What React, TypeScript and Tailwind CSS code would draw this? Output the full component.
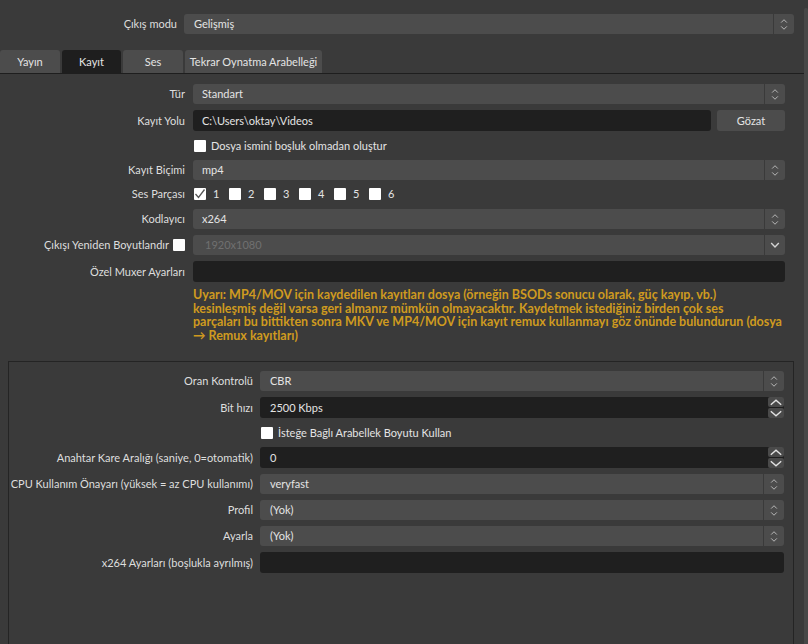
import React from "react";

const ComboArrows = ({ single = false }: { single?: boolean }) => (
  <div className="flex h-full w-[21px] shrink-0 items-center justify-center border-l border-[#3a3a3a]">
    {single ? (
      <svg width="21" height="20" viewBox="0 0 21 20" fill="none">
        <path d="M6.5 8 L10.5 12 L14.5 8" stroke="#d4d4d4" strokeWidth="1.5" />
      </svg>
    ) : (
      <svg width="21" height="20" viewBox="0 0 21 20" fill="none">
        <path d="M7.5 8.5 L10.5 5.5 L13.5 8.5" stroke="#bdbdbd" strokeWidth="1" />
        <path d="M7.5 12.5 L10.5 15.5 L13.5 12.5" stroke="#bdbdbd" strokeWidth="1" />
      </svg>
    )}
  </div>
);

const Combo = ({
  value,
  single = false,
  disabled = false,
  pad = "pl-[9px]",
}: {
  value: string;
  single?: boolean;
  disabled?: boolean;
  pad?: string;
}) => (
  <div className="flex h-[20px] flex-1 items-center rounded-[3px] bg-[#4c4c4c]">
    <div
      className={`flex-1 truncate leading-[16px] ${pad} ${disabled ? "text-[#707070]" : "text-[#e4e4e4]"}`}
    >
      {value}
    </div>
    <ComboArrows single={single} />
  </div>
);

const DarkInput = ({ value = "", pad = "pl-[9px]" }: { value?: string; pad?: string }) => (
  <div className={`flex h-[21px] flex-1 items-center rounded-[3px] bg-[#1f1f1f] ${pad} text-[#e4e4e4]`}>
    {value}
  </div>
);

const SpinBox = ({ value }: { value: string }) => (
  <div className="flex h-[21px] flex-1 items-stretch rounded-[3px] bg-[#1f1f1f]">
    <div className="flex flex-1 items-center pl-[10px] text-[#e4e4e4]">{value}</div>
    <div className="flex w-[16px] flex-col gap-[1px]">
      <div className="flex flex-1 items-center justify-center rounded-[2px] bg-[#4a4a4a]">
        <svg width="12" height="7" viewBox="0 0 12 7" fill="none">
          <path d="M0.8 5.8 L6 1.2 L11.2 5.8" stroke="#e2e2e2" strokeWidth="1.4" />
        </svg>
      </div>
      <div className="flex flex-1 items-center justify-center rounded-[2px] bg-[#4a4a4a]">
        <svg width="12" height="7" viewBox="0 0 12 7" fill="none">
          <path d="M0.8 1.2 L6 5.8 L11.2 1.2" stroke="#e2e2e2" strokeWidth="1.4" />
        </svg>
      </div>
    </div>
  </div>
);

const Check = ({ checked = false }: { checked?: boolean }) => (
  <div className="flex h-[12px] w-[12px] shrink-0 items-center justify-center rounded-[1px] bg-white">
    {checked && (
      <svg width="12" height="12" viewBox="0 0 12 12" fill="none">
        <path d="M1.5 6 L4.5 9.5 L10.5 1.5" stroke="#555" strokeWidth="1.3" />
      </svg>
    )}
  </div>
);

const Row = ({
  label,
  labelW,
  gap,
  className = "",
  children,
}: {
  label?: React.ReactNode;
  labelW: string;
  gap: string;
  className?: string;
  children: React.ReactNode;
}) => (
  <div className={`flex shrink-0 items-center ${gap} ${className}`}>
    <div className={`${labelW} shrink-0 whitespace-nowrap text-right text-[#dedede]`}>{label}</div>
    {children}
  </div>
);

const tabs = ["Yayın", "Kayıt", "Ses", "Tekrar Oynatma Arabelleği"];
const tabWidths = ["w-[60px]", "w-[59px]", "w-[60px]", "w-[137px]"];

export default function App() {
  return (
    <div className="flex h-[644px] w-[808px] overflow-hidden bg-[#3a3a3a] font-['Lato',sans-serif] text-[11px] leading-[16px] text-[#e4e4e4]">
      <div className="flex w-[804px] shrink-0 flex-col">
        {/* output mode */}
        <div className="mt-[14px] flex shrink-0 items-center gap-[7px] pr-[10px]">
          <div className="w-[177px] shrink-0 text-right text-[#dedede]">Çıkış modu</div>
          <Combo value="Gelişmiş" pad="pl-[10px]" />
        </div>

        {/* tab bar */}
        <div className="mt-[16px] flex h-[23px] shrink-0 gap-[2px]">
          {tabs.map((t, i) => (
            <div
              key={t}
              className={`${tabWidths[i]} flex items-center justify-center whitespace-nowrap rounded-t-[3px] ${
                i === 1 ? "bg-[#1e1e1e]" : "bg-[#4c4c4c]"
              } text-[#e4e4e4]`}
            >
              {t}
            </div>
          ))}
        </div>

        {/* recording pane */}
        <div className="flex min-h-0 flex-1 flex-col overflow-hidden border-t border-[#1e1e1e] pr-[19px]">
          <Row label="Tür" labelW="w-[185px]" gap="gap-[8px]" className="mt-[10px]">
            <Combo value="Standart" />
          </Row>
          <Row label="Kayıt Yolu" labelW="w-[185px]" gap="gap-[8px]" className="mt-[6px]">
            <div className="flex flex-1 gap-[6px]">
              <DarkInput value="C:\Users\oktay\Videos" />
              <div className="flex h-[21px] w-[68px] items-center justify-center rounded-[3px] bg-[#4c4c4c] text-[#e4e4e4]">
                Gözat
              </div>
            </div>
          </Row>
          <Row labelW="w-[185px]" gap="gap-[9px]" className="mt-[5px] h-[20px]">
            <div className="flex items-center gap-[5px]">
              <Check />
              <span>Dosya ismini boşluk olmadan oluştur</span>
            </div>
          </Row>
          <Row label="Kayıt Biçimi" labelW="w-[185px]" gap="gap-[8px]" className="mt-[4px]">
            <Combo value="mp4" />
          </Row>
          <Row label="Ses Parçası" labelW="w-[185px]" gap="gap-[9px]" className="mt-[4px] h-[20px]">
            <div className="flex items-center gap-[12px]">
              {[1, 2, 3, 4, 5, 6].map((n) => (
                <div key={n} className="flex w-[23px] items-center gap-[7px]">
                  <Check checked={n === 1} />
                  <span>{n}</span>
                </div>
              ))}
            </div>
          </Row>
          <Row label="Kodlayıcı" labelW="w-[185px]" gap="gap-[8px]" className="mt-[5px]">
            <Combo value="x264" />
          </Row>
          <Row
            label={
              <div className="flex items-center justify-end gap-[4px]">
                <span>Çıkışı Yeniden Boyutlandır</span>
                <Check />
              </div>
            }
            labelW="w-[185px]"
            gap="gap-[8px]"
            className="mt-[6px]"
          >
            <Combo value="1920x1080" single disabled pad="pl-[12px]" />
          </Row>
          <Row label="Özel Muxer Ayarları" labelW="w-[185px]" gap="gap-[8px]" className="mt-[6px]">
            <DarkInput />
          </Row>

          {/* warning */}
          <div className="ml-[193px] mt-[6px] flex shrink-0 flex-col text-[12.5px] font-bold leading-[13.5px] text-[#cf9a1f]">
            <span className="whitespace-nowrap">
              Uyarı: MP4/MOV için kaydedilen kayıtları dosya (örneğin BSODs sonucu olarak, güç kayıp, vb.)
            </span>
            <span className="whitespace-nowrap">
              kesinleşmiş değil varsa geri almanız mümkün olmayacaktır. Kaydetmek istediğiniz birden çok ses
            </span>
            <span className="whitespace-nowrap">
              parçaları bu bittikten sonra MKV ve MP4/MOV için kayıt remux kullanmayı göz önünde bulundurun (dosya
            </span>
            <span className="whitespace-nowrap">→ Remux kayıtları)</span>
          </div>

          {/* encoder settings group */}
          <div className="ml-[8px] mr-[-9px] mt-[19px] flex h-[320px] shrink-0 flex-col border border-[#242424] pr-[9px]">
            <Row label="Oran Kontrolü" labelW="w-[244px]" gap="gap-[7px]" className="mt-[9px]">
              <Combo value="CBR" pad="pl-[10px]" />
            </Row>
            <Row label="Bit hızı" labelW="w-[244px]" gap="gap-[7px]" className="mt-[6px]">
              <SpinBox value="2500 Kbps" />
            </Row>
            <Row labelW="w-[244px]" gap="gap-[8px]" className="mt-[5px] h-[20px]">
              <div className="flex items-center gap-[5px]">
                <Check />
                <span>İsteğe Bağlı Arabellek Boyutu Kullan</span>
              </div>
            </Row>
            <Row label="Anahtar Kare Aralığı (saniye, 0=otomatik)" labelW="w-[244px]" gap="gap-[7px]" className="mt-[4px]">
              <SpinBox value="0" />
            </Row>
            <Row label="CPU Kullanım Önayarı (yüksek = az CPU kullanımı)" labelW="w-[244px]" gap="gap-[7px]" className="mt-[6px]">
              <Combo value="veryfast" pad="pl-[10px]" />
            </Row>
            <Row label="Profil" labelW="w-[244px]" gap="gap-[7px]" className="mt-[6px]">
              <Combo value="(Yok)" pad="pl-[10px]" />
            </Row>
            <Row label="Ayarla" labelW="w-[244px]" gap="gap-[7px]" className="mt-[6px]">
              <Combo value="(Yok)" pad="pl-[10px]" />
            </Row>
            <Row label="x264 Ayarları (boşlukla ayrılmış)" labelW="w-[244px]" gap="gap-[7px]" className="mt-[6px]">
              <DarkInput />
            </Row>
          </div>
        </div>
      </div>

      {/* scrollbar track */}
      <div className="mt-[8px] w-[4px] shrink-0 rounded-t-[2px] bg-[#474747]" />
    </div>
  );
}
